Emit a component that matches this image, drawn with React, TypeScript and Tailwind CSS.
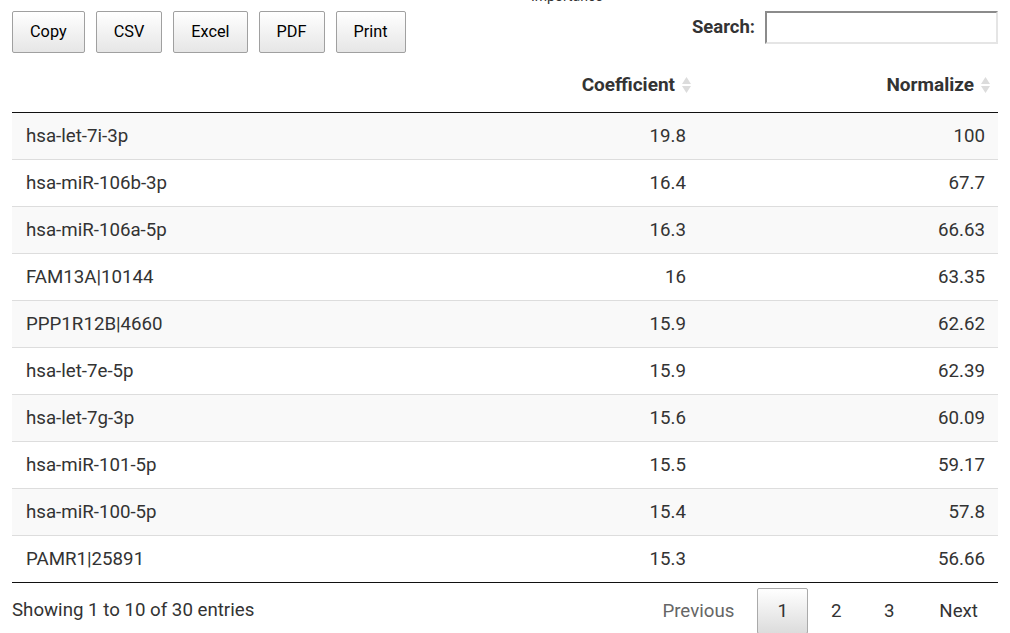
const rows: [string, string, string][] = [
  ['hsa-let-7i-3p', '19.8', '100'],
  ['hsa-miR-106b-3p', '16.4', '67.7'],
  ['hsa-miR-106a-5p', '16.3', '66.63'],
  ['FAM13A|10144', '16', '63.35'],
  ['PPP1R12B|4660', '15.9', '62.62'],
  ['hsa-let-7e-5p', '15.9', '62.39'],
  ['hsa-let-7g-3p', '15.6', '60.09'],
  ['hsa-miR-101-5p', '15.5', '59.17'],
  ['hsa-miR-100-5p', '15.4', '57.8'],
  ['PAMR1|25891', '15.3', '56.66'],
]

function SortIcon() {
  return (
    <svg width="11" height="20" viewBox="0 0 11 20" className="ml-[6px] shrink-0">
      <path d="M5.5 2 L10 9 H1 Z" fill="#dcdcdc" />
      <path d="M5.5 18 L10 11 H1 Z" fill="#dcdcdc" />
    </svg>
  )
}

export default function App() {
  return (
    <div className="relative w-[1010px] h-[633px] overflow-hidden bg-white text-[#333] text-[18.7px] font-['Roboto',sans-serif]">
      <div className="absolute left-[531px] top-[-10px] text-[14px] text-[#333] leading-[13px]">Importance</div>
      <div className="px-[12px]">
        <div className="flex items-start justify-between pt-[11px]">
          <div className="flex gap-[11px]">
            {['Copy', 'CSV', 'Excel', 'PDF', 'Print'].map(b => (
              <button
                key={b}
                className="h-[42px] px-[17px] border border-[#a0a0a0] rounded-[2px] bg-gradient-to-b from-white to-[#e6e6e6] text-[16.3px] text-black"
              >
                {b}
              </button>
            ))}
          </div>
          <label className="flex items-center font-bold text-[18.5px] text-[#333]">
            Search:
            <input className="ml-[10px] w-[233px] h-[33px] border-2 border-t-[#8b8b8b] border-l-[#8b8b8b] border-r-[#e5e5e5] border-b-[#e5e5e5] bg-white" />
          </label>
        </div>

        <table className="w-full mt-[9px] border-collapse">
          <thead>
            <tr className="border-b border-[#111]">
              <th className="w-[386px]" />
              <th className="pt-[12px] pb-[16px] pr-[7px] text-[19px]">
                <div className="flex items-center justify-end leading-[22px]">
                  Coefficient
                  <SortIcon />
                </div>
              </th>
              <th className="w-[299px] pt-[12px] pb-[16px] pr-[7px] text-[19px]">
                <div className="flex items-center justify-end leading-[22px]">
                  Normalize
                  <SortIcon />
                </div>
              </th>
            </tr>
          </thead>
          <tbody>
            {rows.map(([name, c, n], i) => (
              <tr
                key={name}
                className={`${i % 2 === 0 ? 'bg-[#f9f9f9]' : 'bg-white'} ${i > 0 ? 'border-t border-t-[#ddd]' : ''} ${i === rows.length - 1 ? 'border-b border-b-[#111]' : ''}`}
              >
                <td className="px-[14px] py-[12px] leading-[22px]">{name}</td>
                <td className="pr-[13px] py-[12px] leading-[22px] text-right">{c}</td>
                <td className="pr-[13px] py-[12px] leading-[22px] text-right">{n}</td>
              </tr>
            ))}
          </tbody>
        </table>

        <div className="flex items-start justify-between">
          <div className="pt-[16px] leading-[22px]">Showing 1 to 10 of 30 entries</div>
          <div className="flex items-center pt-[5px] pr-[8px]">
            <span className="px-[18px] py-[10px] leading-[22px] text-[#666]">Previous</span>
            <span className="ml-[5px] w-[51px] h-[46px] flex items-center justify-center border border-[#aaa] rounded-[2px] bg-gradient-to-b from-white to-[#dcdcdc]">1</span>
            <span className="w-[56px] text-center py-[10px] leading-[22px]">2</span>
            <span className="w-[50px] text-center py-[10px] leading-[22px]">3</span>
            <span className="pl-[25px] pr-[12px] py-[10px] leading-[22px]">Next</span>
          </div>
        </div>
      </div>
    </div>
  )
}
